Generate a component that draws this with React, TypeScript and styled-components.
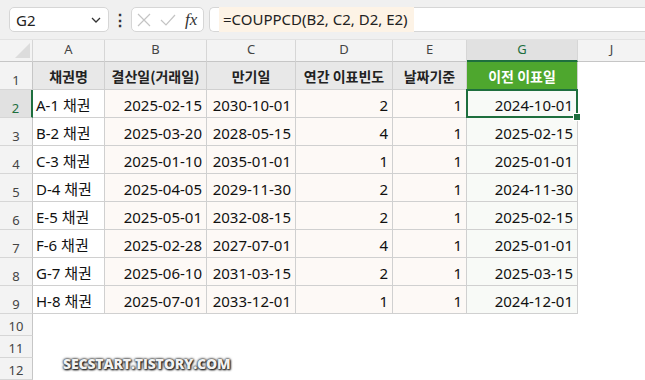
import * as React from 'react'
import styled, { createGlobalStyle, css } from 'styled-components'

const GlobalStyle = createGlobalStyle`
    html, body {
        margin: 0;
        padding: 0;
        background: #ffffff;
    }
    body {
        font-family: "Noto Sans", "Noto Sans CJK KR", sans-serif;
    }
`

const FONT = `"Noto Sans", "Noto Sans CJK KR", sans-serif`
const GREEN = '#1e6f3e'

const columns = ['A', 'B', 'C', 'D', 'E', 'G', 'J']
const widths = [33, 72, 102, 89, 97, 74, 111, 67]

const headers = ['채권명', '결산일(거래일)', '만기일', '연간 이표빈도', '날짜기준', '이전 이표일']

const rows: string[][] = [
    ['A-1 채권', '2025-02-15', '2030-10-01', '2', '1', '2024-10-01'],
    ['B-2 채권', '2025-03-20', '2028-05-15', '4', '1', '2025-02-15'],
    ['C-3 채권', '2025-01-10', '2035-01-01', '1', '1', '2025-01-01'],
    ['D-4 채권', '2025-04-05', '2029-11-30', '2', '1', '2024-11-30'],
    ['E-5 채권', '2025-05-01', '2032-08-15', '2', '1', '2025-02-15'],
    ['F-6 채권', '2025-02-28', '2027-07-01', '4', '1', '2025-01-01'],
    ['G-7 채권', '2025-06-10', '2031-03-15', '2', '1', '2025-03-15'],
    ['H-8 채권', '2025-07-01', '2033-12-01', '1', '1', '2024-12-01'],
]

const App = () => (
    <Page>
        <GlobalStyle />
        <Toolbar>
            <NameBox>
                <span>G2</span>
                <svg width="12" height="8" viewBox="0 0 12 8">
                    <path d="M2 2 L6 6 L10 2" fill="none" stroke="#333" strokeWidth="1.3" />
                </svg>
            </NameBox>
            <Dots>⋮</Dots>
            <FxBox>
                <svg width="16" height="16" viewBox="0 0 16 16">
                    <path d="M2 2 L14 14 M14 2 L2 14" stroke="#c4c4c4" strokeWidth="1.2" />
                </svg>
                <svg width="18" height="16" viewBox="0 0 18 16">
                    <path d="M2 8 L7 13 L16 3" fill="none" stroke="#c4c4c4" strokeWidth="1.2" />
                </svg>
                <Fx>fx</Fx>
            </FxBox>
            <FormulaBox>
                <Formula>=COUPPCD(B2, C2, D2, E2)</Formula>
            </FormulaBox>
        </Toolbar>
        <Sheet>
            <Corner>
                <svg width="15" height="15" viewBox="0 0 15 15">
                    <path d="M15 0 L15 15 L0 15 Z" fill="#dcdcdc" />
                </svg>
            </Corner>
            {columns.map(c => (
                <ColHeader key={c} $selected={c === 'G'} $last={c === 'J'}>
                    {c}
                </ColHeader>
            ))}

            <RowHeader>1</RowHeader>
            {headers.map((h, i) => (
                <HeadCell key={h} $green={i === 5}>
                    {h}
                </HeadCell>
            ))}
            <Blank />

            {rows.map((r, ri) => (
                <React.Fragment key={r[0]}>
                    <RowHeader $selected={ri === 0}>{ri + 2}</RowHeader>
                    {r.map((v, ci) => (
                        <Cell
                            key={ci}
                            $tone={ci === 0 ? 'plain' : ci === 5 ? 'result' : 'warm'}
                            $align={ci === 0 ? 'left' : 'right'}
                            $active={ri === 0 && ci === 5}
                        >
                            {v}
                        </Cell>
                    ))}
                    <Blank />
                </React.Fragment>
            ))}

            {[10, 11, 12].map(n => (
                <React.Fragment key={n}>
                    <RowHeader $short>{n}</RowHeader>
                    {columns.map(c => (
                        <Blank key={c} />
                    ))}
                </React.Fragment>
            ))}
        </Sheet>
        <Watermark>SECSTART.TISTORY.COM</Watermark>
    </Page>
)

export default App

const Page = styled.div`
    position: relative;
    width: 645px;
    height: 380px;
    overflow: hidden;
    background: #ffffff;
    font-family: ${FONT};
`

const Toolbar = styled.div`
    height: 40px;
    box-sizing: border-box;
    padding: 7px 0 7px 9px;
    display: flex;
    align-items: stretch;
    background: #f0f0f0;
    border-bottom: 1px solid #e2e2e2;
`

const boxBase = css`
    box-sizing: border-box;
    background: #ffffff;
    border: 1px solid #d6d6d6;
    border-radius: 5px;
`

const NameBox = styled.div`
    ${boxBase};
    width: 100px;
    display: flex;
    align-items: center;
    justify-content: space-between;
    padding: 0 6px 0 6px;
    font-size: 15px;
    color: #222;
`

const Dots = styled.div`
    width: 22px;
    display: flex;
    align-items: center;
    justify-content: center;
    font-size: 16px;
    font-weight: bold;
    color: #333;
`

const FxBox = styled.div`
    ${boxBase};
    width: 73px;
    display: flex;
    align-items: center;
    gap: 7px;
    padding: 0 4px 0 4px;
`

const Fx = styled.span`
    font-family: "Liberation Serif", serif;
    font-style: italic;
    font-size: 17px;
    color: #333;
    margin-left: 1px;
`

const FormulaBox = styled.div`
    ${boxBase};
    flex: 1;
    margin-left: 5px;
    border-right: none;
    border-radius: 5px 0 0 5px;
    display: flex;
    align-items: center;
    padding-left: 9px;
`

const Formula = styled.span`
    background: #fdf3e6;
    font-size: 15px;
    color: #222;
    line-height: 25px;
    padding: 0 6px 0 4px;
`

const Sheet = styled.div`
    display: grid;
    grid-template-columns: ${widths.map(w => `${w}px`).join(' ')};
    grid-template-rows: 22px repeat(9, 28px) repeat(3, 22px);
    font-size: 15px;
`

const Corner = styled.div`
    background: #f3f3f3;
    border-right: 1px solid #d6d6d6;
    border-bottom: 1px solid #c6c6c6;
    display: flex;
    align-items: flex-end;
    justify-content: flex-end;
    padding: 0 2px 3px 0;
`

const ColHeader = styled.div<{ $selected?: boolean; $last?: boolean }>`
    box-sizing: border-box;
    display: flex;
    align-items: center;
    justify-content: center;
    padding-bottom: 3px;
    font-size: 13px;
    background: ${p => (p.$selected ? '#e1e1e1' : '#f3f3f3')};
    border-right: ${p => (p.$last ? 'none' : '1px solid #d6d6d6')};
    border-bottom: ${p => (p.$selected ? `2px solid ${GREEN}` : '1px solid #c6c6c6')};
    color: ${p => (p.$selected ? GREEN : '#444')};
`

const RowHeader = styled.div<{ $selected?: boolean; $short?: boolean }>`
    box-sizing: border-box;
    display: flex;
    align-items: center;
    justify-content: center;
    padding-top: ${p => (p.$short ? '3px' : '9px')};
    font-size: 13px;
    color: ${p => (p.$selected ? GREEN : '#444')};
    background: ${p => (p.$selected ? '#e1e1e1' : '#f3f3f3')};
    border-bottom: 1px solid #d6d6d6;
    border-right: ${p => (p.$selected ? `2px solid ${GREEN}` : '1px solid #c6c6c6')};
`

const HeadCell = styled.div<{ $green?: boolean }>`
    box-sizing: border-box;
    display: flex;
    align-items: center;
    justify-content: center;
    font-family: "Noto Sans CJK KR", sans-serif;
    font-weight: bold;
    font-size: 14px;
    color: ${p => (p.$green ? '#ffffff' : '#222')};
    background: ${p => (p.$green ? '#4ea72e' : '#e8e8e8')};
    border-right: 1px solid #d0d0d0;
    border-bottom: 1px solid #d0d0d0;
`

const tones = {
    plain: '#ffffff',
    warm: '#fdf9f6',
    result: '#f8faf7',
}

const Cell = styled.div<{ $tone: keyof typeof tones; $align: 'left' | 'right'; $active?: boolean }>`
    position: relative;
    box-sizing: border-box;
    display: flex;
    align-items: center;
    justify-content: ${p => (p.$align === 'left' ? 'flex-start' : 'flex-end')};
    padding: 2px 4px 0 3px;
    white-space: nowrap;
    font-family: "Noto Sans", "Noto Sans CJK KR", sans-serif;
    color: #111;
    background: ${p => tones[p.$tone]};
    border-right: 1px solid #d0d0d0;
    border-bottom: 1px solid #d0d0d0;

    ${p =>
        p.$active &&
        css`
            &::after {
                content: '';
                position: absolute;
                left: -1px;
                top: -1px;
                right: -1px;
                bottom: -1px;
                border: 2px solid ${GREEN};
            }
            &::before {
                content: '';
                position: absolute;
                right: -4px;
                bottom: -4px;
                width: 6px;
                height: 6px;
                background: ${GREEN};
                border: 1px solid #fff;
                z-index: 2;
            }
        `}
`

const Blank = styled.div`
    background: #ffffff;
`

const Watermark = styled.div`
    position: absolute;
    left: 63px;
    top: 354px;
    font-family: "Open Sans", "Noto Sans", sans-serif;
    font-weight: 800;
    font-size: 14px;
    letter-spacing: -0.15px;
    color: #f2f2f2;
    text-shadow: 0 0 2px #222, 0 0 3px #222, 1px 1px 2px #000;
`
